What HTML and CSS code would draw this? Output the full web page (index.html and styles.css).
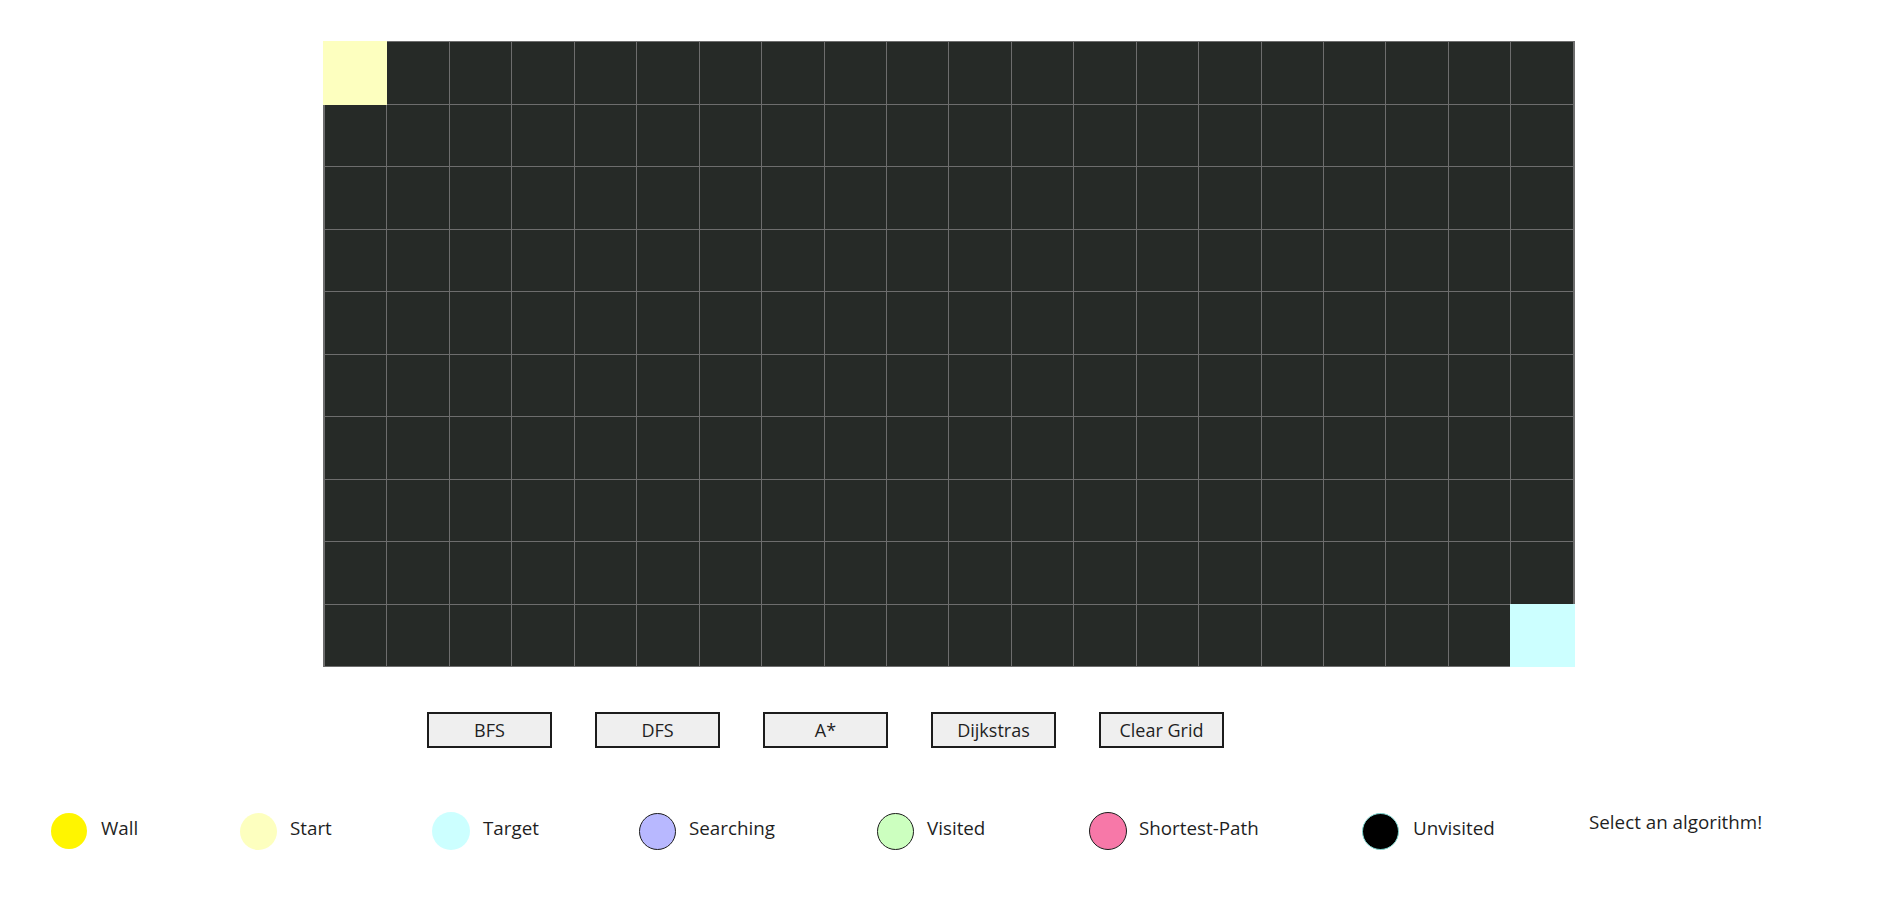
FILE: index.html
```html
<!DOCTYPE html>
<html>
<head>
<meta charset="utf-8">
<title>Pathfinding Visualizer</title>
<link rel="stylesheet" href="styles.css">
</head>
<body>
<div class="page">
  <div class="grid">
    <div class="cell start"></div><div class="cell"></div><div class="cell"></div><div class="cell"></div><div class="cell"></div><div class="cell"></div><div class="cell"></div><div class="cell"></div><div class="cell"></div><div class="cell"></div><div class="cell"></div><div class="cell"></div><div class="cell"></div><div class="cell"></div><div class="cell"></div><div class="cell"></div><div class="cell"></div><div class="cell"></div><div class="cell"></div><div class="cell"></div>
    <div class="cell"></div><div class="cell"></div><div class="cell"></div><div class="cell"></div><div class="cell"></div><div class="cell"></div><div class="cell"></div><div class="cell"></div><div class="cell"></div><div class="cell"></div><div class="cell"></div><div class="cell"></div><div class="cell"></div><div class="cell"></div><div class="cell"></div><div class="cell"></div><div class="cell"></div><div class="cell"></div><div class="cell"></div><div class="cell"></div>
    <div class="cell"></div><div class="cell"></div><div class="cell"></div><div class="cell"></div><div class="cell"></div><div class="cell"></div><div class="cell"></div><div class="cell"></div><div class="cell"></div><div class="cell"></div><div class="cell"></div><div class="cell"></div><div class="cell"></div><div class="cell"></div><div class="cell"></div><div class="cell"></div><div class="cell"></div><div class="cell"></div><div class="cell"></div><div class="cell"></div>
    <div class="cell"></div><div class="cell"></div><div class="cell"></div><div class="cell"></div><div class="cell"></div><div class="cell"></div><div class="cell"></div><div class="cell"></div><div class="cell"></div><div class="cell"></div><div class="cell"></div><div class="cell"></div><div class="cell"></div><div class="cell"></div><div class="cell"></div><div class="cell"></div><div class="cell"></div><div class="cell"></div><div class="cell"></div><div class="cell"></div>
    <div class="cell"></div><div class="cell"></div><div class="cell"></div><div class="cell"></div><div class="cell"></div><div class="cell"></div><div class="cell"></div><div class="cell"></div><div class="cell"></div><div class="cell"></div><div class="cell"></div><div class="cell"></div><div class="cell"></div><div class="cell"></div><div class="cell"></div><div class="cell"></div><div class="cell"></div><div class="cell"></div><div class="cell"></div><div class="cell"></div>
    <div class="cell"></div><div class="cell"></div><div class="cell"></div><div class="cell"></div><div class="cell"></div><div class="cell"></div><div class="cell"></div><div class="cell"></div><div class="cell"></div><div class="cell"></div><div class="cell"></div><div class="cell"></div><div class="cell"></div><div class="cell"></div><div class="cell"></div><div class="cell"></div><div class="cell"></div><div class="cell"></div><div class="cell"></div><div class="cell"></div>
    <div class="cell"></div><div class="cell"></div><div class="cell"></div><div class="cell"></div><div class="cell"></div><div class="cell"></div><div class="cell"></div><div class="cell"></div><div class="cell"></div><div class="cell"></div><div class="cell"></div><div class="cell"></div><div class="cell"></div><div class="cell"></div><div class="cell"></div><div class="cell"></div><div class="cell"></div><div class="cell"></div><div class="cell"></div><div class="cell"></div>
    <div class="cell"></div><div class="cell"></div><div class="cell"></div><div class="cell"></div><div class="cell"></div><div class="cell"></div><div class="cell"></div><div class="cell"></div><div class="cell"></div><div class="cell"></div><div class="cell"></div><div class="cell"></div><div class="cell"></div><div class="cell"></div><div class="cell"></div><div class="cell"></div><div class="cell"></div><div class="cell"></div><div class="cell"></div><div class="cell"></div>
    <div class="cell"></div><div class="cell"></div><div class="cell"></div><div class="cell"></div><div class="cell"></div><div class="cell"></div><div class="cell"></div><div class="cell"></div><div class="cell"></div><div class="cell"></div><div class="cell"></div><div class="cell"></div><div class="cell"></div><div class="cell"></div><div class="cell"></div><div class="cell"></div><div class="cell"></div><div class="cell"></div><div class="cell"></div><div class="cell"></div>
    <div class="cell"></div><div class="cell"></div><div class="cell"></div><div class="cell"></div><div class="cell"></div><div class="cell"></div><div class="cell"></div><div class="cell"></div><div class="cell"></div><div class="cell"></div><div class="cell"></div><div class="cell"></div><div class="cell"></div><div class="cell"></div><div class="cell"></div><div class="cell"></div><div class="cell"></div><div class="cell"></div><div class="cell"></div><div class="cell target"></div>
  </div>

  <div class="controls">
    <button class="btn">BFS</button>
    <button class="btn">DFS</button>
    <button class="btn">A*</button>
    <button class="btn">Dijkstras</button>
    <button class="btn">Clear Grid</button>
  </div>

  <div class="legend">
    <div class="item"><span class="dot wall"></span><span class="label">Wall</span></div>
    <div class="item"><span class="dot start-dot"></span><span class="label">Start</span></div>
    <div class="item"><span class="dot target-dot"></span><span class="label">Target</span></div>
    <div class="item"><span class="dot searching"></span><span class="label">Searching</span></div>
    <div class="item"><span class="dot visited"></span><span class="label">Visited</span></div>
    <div class="item"><span class="dot shortest"></span><span class="label">Shortest-Path</span></div>
    <div class="item"><span class="dot unvisited"></span><span class="label">Unvisited</span></div>
    <div class="item status">Select an algorithm!</div>
  </div>
</div>
</body>
</html>
```

FILE: styles.css
```css
* { box-sizing: border-box; }

body {
  margin: 0;
  background: #ffffff;
  font-family: "Open Sans", "Noto Sans", "Liberation Sans", sans-serif;
  font-size: 18px;
  color: #1f1f1f;
}

.page {
  padding-top: 41px;
}

.grid {
  display: grid;
  grid-template-columns: repeat(20, 61.45px);
  grid-template-rows: repeat(10, 61.5px);
  gap: 1px;
  padding: 1px 2px;
  background: #6d6d6d;
  width: max-content;
  margin-left: 323px;
}

.cell {
  background: #262a27;
}

.cell.start {
  background: #fdffbf;
  margin: -1px -1px -1px -2px;
}

.cell.target {
  background: #ccffff;
  margin: -1px -2px -1px -1px;
}

.controls {
  display: flex;
  gap: 43px;
  margin-top: 45px;
  padding-left: 427px;
}

.btn {
  width: 125px;
  height: 36px;
  padding: 0;
  background: #efefef;
  border: 2px solid #1c1c1c;
  font-family: inherit;
  font-size: 18px;
  color: #1f1f1f;
  line-height: 1;
}

.legend {
  display: grid;
  grid-template-columns: 189px 192px 207px 238px 212px 273px 227px auto;
  align-items: center;
  height: 38px;
  margin-top: 64px;
  padding-left: 51px;
  font-size: 18.8px;
}

.item {
  display: flex;
  align-items: center;
  height: 38px;
}

.dot {
  flex: none;
  width: 37px;
  height: 37px;
  border-radius: 50%;
  margin-right: 13px;
}

.label {
  margin-top: -6px;
}

.wall { background: #fff500; width: 36px; height: 36px; margin-right: 14px; }
.start-dot { background: #fdffbf; }
.target-dot { background: #ccffff; width: 38px; height: 38px; }
.searching { background: #b8b8ff; border: 1px solid #1c1c1c; }
.visited { background: #ccffbf; border: 1px solid #1c1c1c; }
.shortest { background: #f778a8; border: 1px solid #1c1c1c; width: 38px; height: 38px; margin-right: 12px; }
.unvisited { background: #000000; border: 1px solid #7fd6d0; margin-right: 14px; }

.status {
  align-items: flex-start;
  margin-top: -6px;
}
```
